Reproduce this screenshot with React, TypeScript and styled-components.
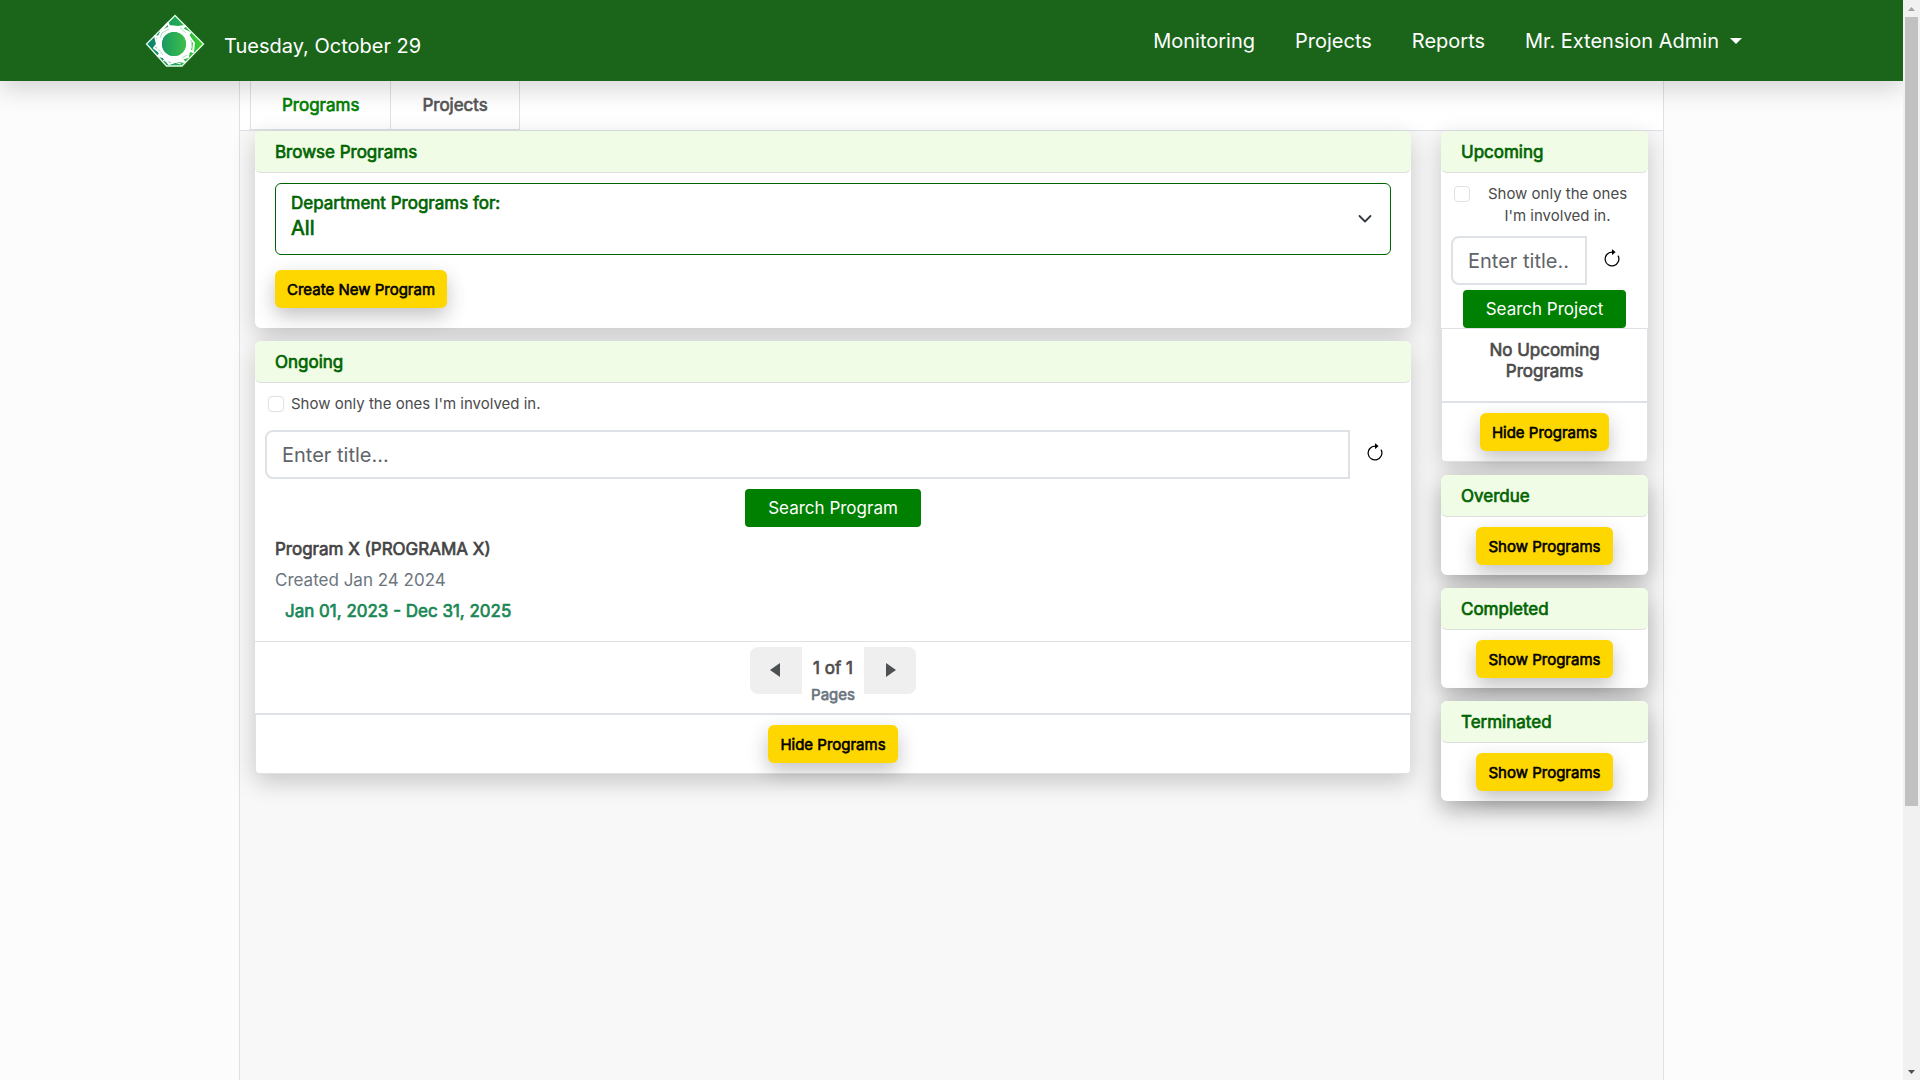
import React, { useState } from "react";
import styled, { createGlobalStyle, css } from "styled-components";

const GlobalStyle = createGlobalStyle`
  *, *::before, *::after { box-sizing: border-box; }
  html, body, #root { height: 100%; }
  body {
    margin: 0;
    overflow: hidden;
    font-family: Inter, "Liberation Sans", sans-serif;
    font-size: 17px;
    line-height: 24px;
    color: #4b4b4b;
    background: #fcfcfc;
  }
  button, input, select { font-family: inherit; margin: 0; }
  button { cursor: pointer; }
  h1, h2, h3, p { margin: 0; }
`;

const heavy = css`
  font-weight: 400;
  -webkit-text-stroke: 0.04em currentColor;
`;

const Viewport = styled.div`
  display: grid;
  grid-template-columns: minmax(0, 1fr) 17px;
  height: 100vh;
`;

const Page = styled.div`
  display: flex;
  flex-direction: column;
  min-width: 0;
  height: 100vh;
  overflow: hidden;
`;

const Navbar = styled.header`
  position: relative;
  z-index: 2;
  flex: none;
  display: flex;
  align-items: center;
  justify-content: space-between;
  height: 81px;
  padding: 0 161px 0 144px;
  background: #1b651b;
  box-shadow: 0 8px 24px rgba(0, 0, 0, 0.16);
`;

const Brand = styled.a`
  display: flex;
  align-items: center;
  gap: 18px;
  color: #fff;
  font-size: 20px;
  line-height: 30px;
  text-decoration: none;
`;

const BrandDate = styled.span`
  padding-top: 10px;
`;

const NavLinks = styled.nav`
  display: flex;
  gap: 40px;
`;

const navItem = css`
  padding: 0;
  border: 0;
  background: none;
  color: #fff;
  font-size: 20px;
  line-height: 30px;
  text-decoration: none;
`;

const NavLink = styled.a`${navItem}`;

const UserMenu = styled.button`
  ${navItem}
  display: flex;
  align-items: center;
  gap: 11px;
  &::after {
    content: "";
    border-top: 6px solid;
    border-left: 6px solid transparent;
    border-right: 6px solid transparent;
  }
`;

const Container = styled.main`
  flex: 1;
  min-height: 0;
  margin: 0 239px;
  border: solid #dee2e6;
  border-width: 0 1px;
  background: #f8f8f8;
`;

const Tabs = styled.nav`
  display: flex;
  height: 50px;
  padding: 0 10px;
  border-bottom: 1px solid #dee2e6;
  background: #fff;
`;

const Tab = styled.a<{ $active?: boolean }>`
  ${heavy}
  padding: 12px 31px;
  border: solid #dee2e6;
  border-width: 0 1px 1px;
  color: ${(p) => (p.$active ? "#008000" : "#555")};
  text-decoration: none;
  & + & { border-left: 0; }
`;

const Columns = styled.div`
  display: grid;
  grid-template-columns: minmax(0, 1156fr) minmax(0, 207fr);
  gap: 30px;
  align-items: start;
  padding: 0 15px;
`;

const Stack = styled.div`
  display: flex;
  flex-direction: column;
  gap: 13px;
`;

const Card = styled.section<{ $deep?: boolean }>`
  border-radius: 6px;
  background: #fff;
  box-shadow: 0 8px 24px rgba(0, 0, 0, ${(p) => (p.$deep ? 0.34 : 0.2)});
`;

const CardHeader = styled.h2`
  ${heavy}
  height: 42px;
  padding: 9px 20px;
  border-bottom: 1px solid #dcdfe0;
  border-radius: 6px;
  background: #f0fce6;
  color: #006400;
  font-size: 17px;
  line-height: 24px;
`;

const BrowseBody = styled.div`
  display: flex;
  flex-direction: column;
  align-items: flex-start;
  gap: 15px;
  padding: 10px 20px 20px;
`;

const Department = styled.button`
  display: flex;
  align-items: center;
  justify-content: space-between;
  width: 100%;
  height: 72px;
  padding: 0 17px 8px 15px;
  border: 1px solid #006400;
  border-radius: 6px;
  background: #fff;
  color: #006400;
  text-align: left;
  svg { margin-top: 8px; }
`;

const DepartmentText = styled.span`
  ${heavy}
  display: flex;
  flex-direction: column;
  padding-top: 2px;
  font-size: 17px;
  line-height: 24px;
  strong { font-weight: 400; font-size: 20px; line-height: 26px; }
`;

const YellowButton = styled.button`
  ${heavy}
  height: 38px;
  padding: 1px 12px 0;
  border: 0;
  border-radius: 6px;
  background: #ffd700;
  color: #000;
  font-size: 15px;
  line-height: 22px;
  white-space: nowrap;
  box-shadow: 0 8px 20px rgba(0, 0, 0, 0.24);
`;

const Filter = styled.label<{ $narrow?: boolean }>`
  display: flex;
  gap: 7px;
  padding: 10px 13px 0;
  font-size: 15px;
  line-height: 22px;
  text-align: ${(p) => (p.$narrow ? "center" : "left")};
  span { flex: ${(p) => (p.$narrow ? "1" : "none")}; padding-left: ${(p) => (p.$narrow ? "3px" : "0")}; }
`;

const CheckBox = styled.input`
  appearance: none;
  flex: none;
  width: 16px;
  height: 16px;
  margin: 3px 0 0;
  border: 1px solid #dee2e6;
  border-radius: 4px;
  background: #fff;
  &:checked { background: #008000; }
`;

const SearchRow = styled.form<{ $gap: number }>`
  display: flex;
  align-items: center;
  padding: ${(p) => p.$gap}px 10px 0;
`;

const SearchInput = styled.input`
  flex: 1;
  min-width: 0;
  height: 49px;
  padding: 8px 15px;
  border: 2px solid #dee2e6;
  border-radius: 8px 0 0 8px;
  background: #fff;
  color: #212529;
  font-size: 20px;
  line-height: 30px;
  outline: 0;
  &::placeholder { color: #5f6469; opacity: 1; }
`;

const ResetButton = styled.button`
  display: flex;
  align-items: center;
  justify-content: center;
  width: 51px;
  height: 49px;
  padding: 0 2px 4px 0;
  border: 0;
  background: none;
  color: #000;
`;

const SearchButton = styled.button`
  height: 38px;
  padding: 0 23px;
  border: 0;
  border-radius: 4px;
  background: #008000;
  color: #fff;
  font-size: 17px;
  line-height: 24px;
  white-space: nowrap;
`;

const Center = styled.div<{ $top: number }>`
  display: flex;
  justify-content: center;
  padding-top: ${(p) => p.$top}px;
`;

const Program = styled.article`
  padding: 7px 20px 14px;
  border-bottom: 1px solid #dee2e6;
  line-height: 31px;
`;

const ProgramTitle = styled.h3`
  ${heavy}
  font-size: 17px;
  color: #444;
`;

const Created = styled.p`
  color: #6c757d;
`;

const Dates = styled.p`
  ${heavy}
  padding-left: 10px;
  color: #198754;
`;

const Pager = styled.nav`
  display: flex;
  justify-content: center;
  height: 71px;
  padding-top: 5px;
`;

const PageButton = styled.button<{ $side: "left" | "right" }>`
  width: 52px;
  height: 47px;
  padding: ${(p) => (p.$side === "left" ? "0 2px 1px 0" : "0 0 1px 2px")};
  border: 0;
  border-radius: ${(p) => (p.$side === "left" ? "8px 0 0 8px" : "0 8px 8px 0")};
  background: #efefef;
  color: #4d5154;
  svg { display: block; margin: 0 auto; }
`;

const PageStatus = styled.div`
  ${heavy}
  width: 62px;
  padding-top: 9px;
  text-align: center;
  small { display: block; font-size: 15px; line-height: 30px; color: #6c757d; }
`;

const Footer = styled.footer<{ $lined?: boolean }>`
  display: flex;
  justify-content: center;
  padding: 10px 0;
  ${(p) =>
    p.$lined &&
    css`
      border: solid #dee2e6;
      border-width: 2px 1px 1px;
      border-radius: 0 0 4px 4px;
    `}
`;

const Empty = styled.p`
  ${heavy}
  height: 73px;
  padding: 11px 20px;
  border: solid #dee2e6;
  border-width: 1px 1px 0;
  line-height: 21px;
  text-align: center;
`;

const Scrollbar = styled.div`
  display: grid;
  grid-template-rows: 17px minmax(0, 1fr) 17px;
  height: 100vh;
  background: #f1f1f1;
  svg { display: block; }
`;

const Thumb = styled.div`
  height: calc(75% + 4px);
  margin: 0 2px;
  background: #c1c1c1;
`;

const Logo = () => (
  <svg width="62" height="56" viewBox="0 0 62 56" aria-hidden="true">
    <defs>
      <linearGradient id="gem" x1="0" x2="1">
        <stop offset="0" stopColor="#087f72" />
        <stop offset="0.5" stopColor="#1fa556" />
        <stop offset="1" stopColor="#3bd126" />
      </linearGradient>
      <linearGradient id="core" x1="0" x2="1">
        <stop offset="0" stopColor="#179a62" />
        <stop offset="1" stopColor="#3fbf4a" />
      </linearGradient>
    </defs>
    <path d="M31 2.500 59.500 31 38 53H22.500L2.500 31Z" fill="url(#gem)" stroke="#e4fbe8" strokeWidth="1.300" />
    <circle cx="30" cy="31" r="15" fill="none" stroke="#fff" strokeWidth="6" />
    <path
      d="M17 18 24 10 25 13 34 14 41 13 38 16 46 20 44 22 50 30 49 39 45 37 44 44 37 46 41 49 34 48 25 51 20 45 24 45 14 43 17 40 10 35 13 31 11 23 16 24Z"
      fill="none"
      stroke="#fff"
      strokeWidth="2"
      strokeLinejoin="round"
    />
    <path d="M19 47.500 28 48.500 37 51" fill="none" stroke="#fff" strokeWidth="1" />
    <path d="M16 25 18 20 25 16M36 15 42 20M47 27 48 34M14 36 19 42M38 45 43 42" fill="none" stroke="#a9e2c0" strokeWidth="1" />
    <circle cx="30" cy="31" r="12" fill="url(#core)" />
  </svg>
);

const Reset = () => (
  <svg width="20" height="20" viewBox="0 0 16 16" fill="currentColor" aria-hidden="true">
    <path fillRule="evenodd" d="M8 3a5 5 0 1 0 4.546 2.914.5.5 0 0 1 .908-.417A6 6 0 1 1 8 2z" />
    <path d="M8 4.466V.534a.25.25 0 0 1 .41-.192l2.360 1.966c.12.1.12.284 0 .384L8.410 4.658A.25.25 0 0 1 8 4.466" />
  </svg>
);

const Chevron = () => (
  <svg width="16" height="16" viewBox="0 0 16 16" fill="none" stroke="#343a40" strokeWidth="1.800" strokeLinecap="round" strokeLinejoin="round" aria-hidden="true">
    <path d="m2.500 5 5.500 5.500L13.500 5" />
  </svg>
);

const Arrow = ({ d }: { d: string }) => (
  <svg width="10" height="16" viewBox="0 0 10 16" fill="currentColor" aria-hidden="true">
    <path d={d} />
  </svg>
);

function Search({ placeholder, gap }: { placeholder: string; gap: number }) {
  const [value, setValue] = useState("");
  return (
    <SearchRow $gap={gap} onSubmit={(e) => e.preventDefault()}>
      <SearchInput aria-label="Title" placeholder={placeholder} value={value} onChange={(e) => setValue(e.target.value)} />
      <ResetButton type="button" aria-label="Reset" onClick={() => setValue("")}>
        <Reset />
      </ResetButton>
    </SearchRow>
  );
}

export default function App() {
  return (
    <>
      <GlobalStyle />
      <Viewport>
        <Page>
          <Navbar>
            <Brand href="#">
              <Logo />
              <BrandDate>Tuesday, October 29</BrandDate>
            </Brand>
            <NavLinks>
              <NavLink href="#">Monitoring</NavLink>
              <NavLink href="#">Projects</NavLink>
              <NavLink href="#">Reports</NavLink>
              <UserMenu type="button">Mr. Extension Admin</UserMenu>
            </NavLinks>
          </Navbar>
          <Container>
            <Tabs>
              <Tab href="#" $active>Programs</Tab>
              <Tab href="#">Projects</Tab>
            </Tabs>
            <Columns>
              <Stack>
                <Card>
                  <CardHeader>Browse Programs</CardHeader>
                  <BrowseBody>
                    <Department type="button">
                      <DepartmentText>
                        Department Programs for:
                        <strong>All</strong>
                      </DepartmentText>
                      <Chevron />
                    </Department>
                    <YellowButton type="button">Create New Program</YellowButton>
                  </BrowseBody>
                </Card>
                <Card>
                  <CardHeader>Ongoing</CardHeader>
                  <Filter>
                    <CheckBox type="checkbox" />
                    <span>Show only the ones I'm involved in.</span>
                  </Filter>
                  <Search placeholder="Enter title..." gap={15} />
                  <Center $top={10}>
                    <SearchButton type="button">Search Program</SearchButton>
                  </Center>
                  <Program>
                    <ProgramTitle>Program X (PROGRAMA X)</ProgramTitle>
                    <Created>Created Jan 24 2024</Created>
                    <Dates>Jan 01, 2023 - Dec 31, 2025</Dates>
                  </Program>
                  <Pager aria-label="Pages">
                    <PageButton type="button" $side="left" aria-label="Previous page">
                      <Arrow d="M10 1v14L0 8Z" />
                    </PageButton>
                    <PageStatus>
                      1 of 1<small>Pages</small>
                    </PageStatus>
                    <PageButton type="button" $side="right" aria-label="Next page">
                      <Arrow d="M0 1v14l10-7Z" />
                    </PageButton>
                  </Pager>
                  <Footer $lined>
                    <YellowButton type="button">Hide Programs</YellowButton>
                  </Footer>
                </Card>
              </Stack>
              <Stack>
                <Card>
                  <CardHeader>Upcoming</CardHeader>
                  <Filter $narrow>
                    <CheckBox type="checkbox" />
                    <span>Show only the ones I'm involved in.</span>
                  </Filter>
                  <Search placeholder="Enter title..." gap={9} />
                  <Center $top={5}>
                    <SearchButton type="button">Search Project</SearchButton>
                  </Center>
                  <Empty>No Upcoming Programs</Empty>
                  <Footer $lined>
                    <YellowButton type="button">Hide Programs</YellowButton>
                  </Footer>
                </Card>
                {["Overdue", "Completed", "Terminated"].map((title) => (
                  <Card key={title} $deep>
                    <CardHeader>{title}</CardHeader>
                    <Footer>
                      <YellowButton type="button">Show Programs</YellowButton>
                    </Footer>
                  </Card>
                ))}
              </Stack>
            </Columns>
          </Container>
        </Page>
        <Scrollbar aria-hidden="true">
          <svg width="17" height="17" viewBox="0 0 17 17"><path d="M5 11h7L8.500 7Z" fill="#a3a3a3" /></svg>
          <Thumb />
          <svg width="17" height="17" viewBox="0 0 17 17"><path d="M5 7h7L8.500 11Z" fill="#505050" /></svg>
        </Scrollbar>
      </Viewport>
    </>
  );
}
